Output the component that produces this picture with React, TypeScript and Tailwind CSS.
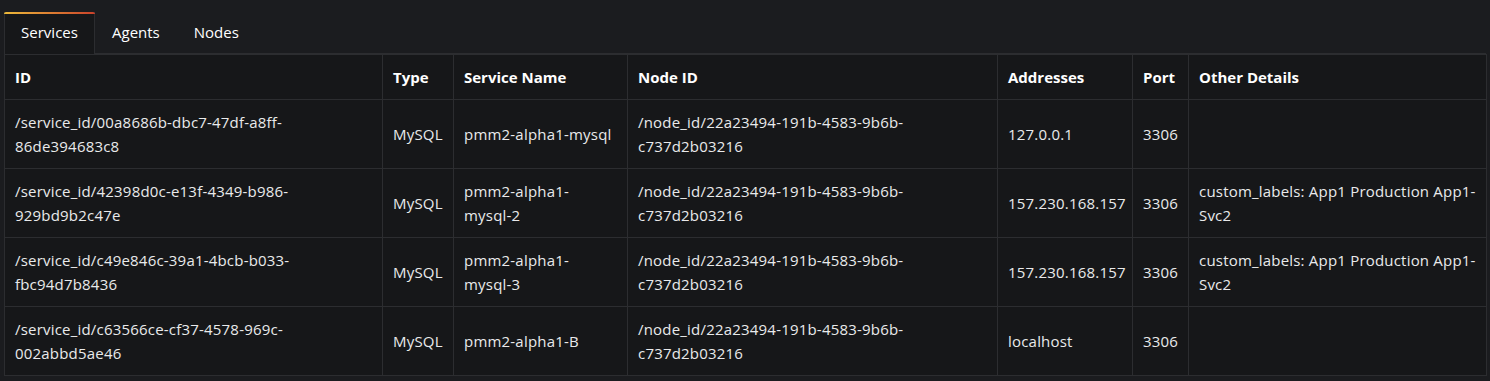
import { useState } from 'react'

interface ServiceRow {
  id: string[]
  type: string
  name: string[]
  nodeId: string[]
  address: string
  port: string
  details: string[]
}

const rows: ServiceRow[] = [
  {
    id: ['/service_id/00a8686b-dbc7-47df-a8ff-', '86de394683c8'],
    type: 'MySQL',
    name: ['pmm2-alpha1-mysql'],
    nodeId: ['/node_id/22a23494-191b-4583-9b6b-', 'c737d2b03216'],
    address: '127.0.0.1',
    port: '3306',
    details: []
  },
  {
    id: ['/service_id/42398d0c-e13f-4349-b986-', '929bd9b2c47e'],
    type: 'MySQL',
    name: ['pmm2-alpha1-', 'mysql-2'],
    nodeId: ['/node_id/22a23494-191b-4583-9b6b-', 'c737d2b03216'],
    address: '157.230.168.157',
    port: '3306',
    details: ['custom_labels: App1 Production App1-', 'Svc2']
  },
  {
    id: ['/service_id/c49e846c-39a1-4bcb-b033-', 'fbc94d7b8436'],
    type: 'MySQL',
    name: ['pmm2-alpha1-', 'mysql-3'],
    nodeId: ['/node_id/22a23494-191b-4583-9b6b-', 'c737d2b03216'],
    address: '157.230.168.157',
    port: '3306',
    details: ['custom_labels: App1 Production App1-', 'Svc2']
  },
  {
    id: ['/service_id/c63566ce-cf37-4578-969c-', '002abbd5ae46'],
    type: 'MySQL',
    name: ['pmm2-alpha1-B'],
    nodeId: ['/node_id/22a23494-191b-4583-9b6b-', 'c737d2b03216'],
    address: 'localhost',
    port: '3306',
    details: []
  }
]

const tabs = ['Services', 'Agents', 'Nodes']

function Lines({ lines }: { lines: string[] }) {
  return (
    <>
      {lines.map((l, i) => (
        <div key={i} className="whitespace-nowrap">{l}</div>
      ))}
    </>
  )
}

export default function App() {
  const [active, setActive] = useState('Services')

  const th = 'border border-[#2c2d30] px-[10px] py-[10px] text-left font-bold text-white align-middle'
  const td = 'border border-[#2c2d30] px-[10px] py-[10px] text-[#e9eaeb] tracking-[0.2px] align-middle'

  return (
    <div className="min-h-[381px] w-[1490px] bg-[#1b1c1f] text-[15px] leading-[24px] font-['Open_Sans',sans-serif]">
      <div className="pt-3 px-1">
        {/* tab bar */}
        <div className="flex border-b border-[#2c2d30]">
          {tabs.map(t => (
            <button
              key={t}
              onClick={() => setActive(t)}
              className={
                t === active
                  ? 'relative -mb-px h-[42px] w-[91px] pb-[2px] border-x border-[#2c2d30] bg-[#161719] text-white'
                  : 'h-[41px] px-[17px] pb-[2px] text-white'
              }
            >
              {t === active && (
                <span className="absolute -left-px -right-px top-0 h-[2px] rounded-t bg-gradient-to-r from-[#ebb93a] to-[#c9402a]" />
              )}
              {t}
            </button>
          ))}
        </div>

        {/* services table */}
        <table className="w-[1482px] table-fixed border-collapse bg-[#161719]">
          <colgroup>
            <col className="w-[378px]" />
            <col className="w-[71px]" />
            <col className="w-[174px]" />
            <col className="w-[370px]" />
            <col className="w-[135px]" />
            <col className="w-[56px]" />
            <col className="w-[298px]" />
          </colgroup>
          <thead>
            <tr>
              <th className={th}>ID</th>
              <th className={th}>Type</th>
              <th className={th}>Service Name</th>
              <th className={th}>Node ID</th>
              <th className={th}>Addresses</th>
              <th className={th}>Port</th>
              <th className={th}>Other Details</th>
            </tr>
          </thead>
          <tbody>
            {rows.map(r => (
              <tr key={r.id[0]}>
                <td className={td}><Lines lines={r.id} /></td>
                <td className={td}>{r.type}</td>
                <td className={td}><Lines lines={r.name} /></td>
                <td className={td}><Lines lines={r.nodeId} /></td>
                <td className={td}>{r.address}</td>
                <td className={td}>{r.port}</td>
                <td className={td}><Lines lines={r.details} /></td>
              </tr>
            ))}
          </tbody>
        </table>
      </div>
    </div>
  )
}
